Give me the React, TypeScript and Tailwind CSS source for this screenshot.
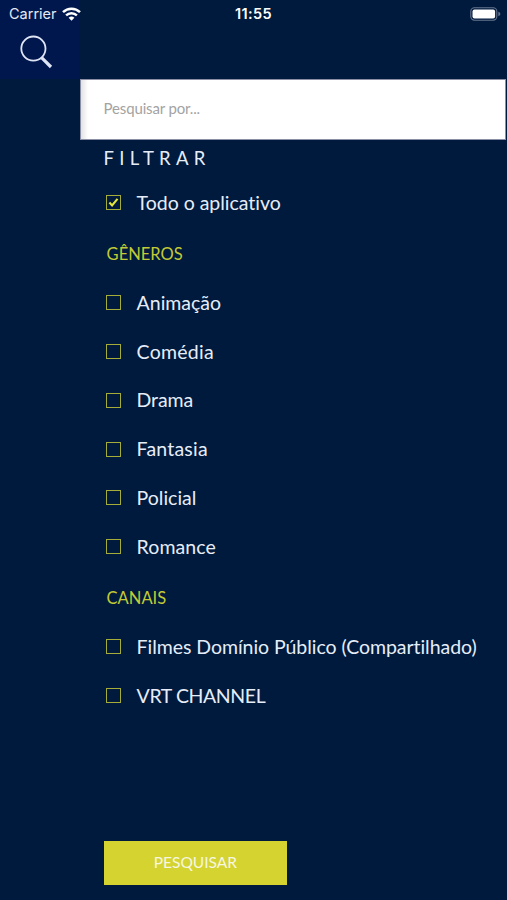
import * as React from "react";
import clsx from "clsx";

type Opcao = { id: string; nome: string; espaco: string };

const TODOS: Opcao = { id: "todos", nome: "Todo o aplicativo", espaco: "tracking-[-0.02px]" };

const GENEROS: Opcao[] = [
  { id: "animacao", nome: "Animação", espaco: "tracking-normal" },
  { id: "comedia", nome: "Comédia", espaco: "tracking-[0.25px]" },
  { id: "drama", nome: "Drama", espaco: "tracking-[-0.1px]" },
  { id: "fantasia", nome: "Fantasia", espaco: "tracking-[0.2px]" },
  { id: "policial", nome: "Policial", espaco: "tracking-normal" },
  { id: "romance", nome: "Romance", espaco: "tracking-[0.1px]" },
];

const CANAIS: Opcao[] = [
  {
    id: "filmes",
    nome: "Filmes Domínio Público (Compartilhado)",
    espaco: "tracking-[-0.05px]",
  },
  { id: "vrt", nome: "VRT CHANNEL", espaco: "tracking-[-0.4px]" },
];

function Wifi() {
  return (
    <svg width="19" height="14" viewBox="0 0 19 14" fill="none" stroke="#fff">
      <path d="M1 5.2a12.2 12.2 0 0 1 17 0" strokeWidth="2.5" />
      <path d="M4.1 8.4a7.7 7.7 0 0 1 10.8 0" strokeWidth="2.4" />
      <path d="M9.5 13.8 6.6 10.8a4.2 4.2 0 0 1 5.8 0Z" fill="#fff" stroke="none" />
    </svg>
  );
}

function Bateria() {
  return (
    <svg width="31" height="14" viewBox="0 0 31 14" fill="none">
      <rect x="0.8" y="0.8" width="26" height="12.4" rx="3.6" stroke="#66758f" strokeWidth="1.1" />
      <rect x="2.5" y="2.5" width="22.6" height="9" rx="2" fill="#fff" />
      <path d="M28.3 4.8c1.4.4 2 1.2 2 2.2s-.6 1.8-2 2.2Z" fill="#66758f" />
    </svg>
  );
}

function BarraStatus() {
  return (
    <div className="grid h-7 grid-cols-3 items-center font-['Inter',sans-serif] text-white">
      <div className="flex items-center gap-[5px] pl-[9px] text-[14.5px] text-[#e3e9f5]">
        Carrier
        <Wifi />
      </div>
      <div className="text-center text-[14.5px] font-semibold tracking-[0.4px]">11:55</div>
      <div className="flex justify-end pr-[6px]">
        <Bateria />
      </div>
    </div>
  );
}

function Item({
  opcao,
  marcado,
  onToggle,
}: {
  opcao: Opcao;
  marcado: boolean;
  onToggle: (id: string) => void;
}) {
  return (
    <button
      type="button"
      role="checkbox"
      aria-checked={marcado}
      onClick={() => onToggle(opcao.id)}
      className="flex h-[48.9px] w-full items-center gap-4 pl-[26px] text-left"
    >
      <span className="flex size-[15px] shrink-0 items-center justify-center border border-[#a5ad38]">
        {marcado && (
          <svg width="11" height="11" viewBox="0 0 11 11" fill="none">
            <path d="m1.4 5.5 2.7 2.9 5.4-6.5" stroke="#e5e63a" strokeWidth="2.1" />
          </svg>
        )}
      </span>
      <span className={clsx("whitespace-nowrap text-[19.5px] text-[#e6edf8]", opcao.espaco)}>
        {opcao.nome}
      </span>
    </button>
  );
}

export default function App() {
  const [busca, setBusca] = React.useState("");
  const [marcados, setMarcados] = React.useState<string[]>(["todos"]);

  function alternar(id: string) {
    setMarcados((atual) =>
      atual.includes(id) ? atual.filter((m) => m !== id) : [...atual, id],
    );
  }

  const listar = (opcoes: Opcao[]) =>
    opcoes.map((o) => (
      <Item key={o.id} opcao={o} marcado={marcados.includes(o.id)} onToggle={alternar} />
    ));

  return (
    <div className="flex h-[900px] w-[507px] flex-col overflow-hidden bg-[#001a3d] font-['Lato',sans-serif] [font-variant-ligatures:none]">
      {/* Topo */}
      <header className="h-[79px] shrink-0 bg-[linear-gradient(to_right,#00174d_79px,transparent_79px)]">
        <BarraStatus />
        <button type="button" aria-label="Buscar" className="ml-5 mt-[7px] block">
          <svg width="33" height="34" viewBox="0 0 33 34" fill="none" stroke="#dfe5f5">
            <circle cx="13.4" cy="13.6" r="12.1" strokeWidth="1.8" />
            <path d="m21.6 22.7 9.4 9.3" strokeWidth="3.2" />
          </svg>
        </button>
      </header>

      {/* Painel de filtros */}
      <main className="ml-[79.6px] flex flex-1 flex-col">
        <input
          value={busca}
          onChange={(e) => setBusca(e.target.value)}
          placeholder="Pesquisar por..."
          className="mr-px h-[61px] shrink-0 border border-[#8b8fa5] bg-white bg-[linear-gradient(to_right,#e2e2e4,#fff_7px)] pb-[3px] pl-[23px] text-[15px] tracking-[-0.15px] text-slate-700 outline-none placeholder:text-[#a3a3a3]"
        />
        <h1 className="h-[38px] pl-[24px] text-[18.5px] leading-[37px] tracking-[5.3px] text-[#e6edf8]">
          FILTRAR
        </h1>
        {listar([TODOS])}
        <h2 className="h-[51px] pl-[27px] text-[16.5px] leading-[54px] text-[#c3ca35]">
          GÊNEROS
        </h2>
        {listar(GENEROS)}
        <h2 className="h-[51px] pl-[27px] text-[16.5px] leading-[54px] text-[#c3ca35]">
          CANAIS
        </h2>
        {listar(CANAIS)}
        <button
          type="button"
          className="mb-[15px] ml-[24px] mt-auto h-11 w-[183.5px] bg-[#d4d330] text-[15.5px] text-[#f7f7e0]"
        >
          PESQUISAR
        </button>
      </main>
    </div>
  );
}
